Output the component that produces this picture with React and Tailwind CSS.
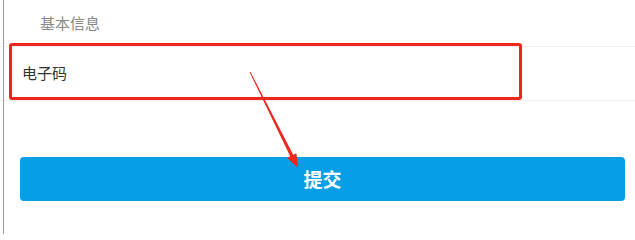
const font = { fontFamily: '"Noto Sans CJK SC", "Liberation Sans", sans-serif' };

const Arrow = () => (
  <svg className="absolute left-0 top-0 pointer-events-none" width="635" height="234">
    <polygon
      fill="#ee271e"
      points="250.4,71.8 293.2,154.7 296.4,153.2 298,168 287,157.8 290.2,156.3 249.6,72.2"
    />
  </svg>
);

export default function App() {
  return (
    <div className="relative w-[635px] h-[234px] bg-white overflow-hidden" style={font}>
      <div className="ml-[3px] h-full border-l border-[#9a9a9a] flex flex-col">
        <div className="h-[46px] flex items-center pl-[36px] text-[15px] text-[#8a8a8a]">
          基本信息
        </div>
        <div className="h-[55px] flex items-center pl-[18px] border-y border-[#f0f0f0] text-[15px] text-[#333]">
          电子码
        </div>
        <button className="mt-[56px] ml-4 mr-[10px] h-[44px] rounded-[4px] bg-[#069fe6] text-white text-[19px] font-bold">
          提交
        </button>
      </div>

      {/* annotation */}
      <div className="absolute left-[9px] top-[43px] w-[513px] h-[57px] border-[3px] border-[#ee271e] rounded-[3px]" />
      <Arrow />
    </div>
  );
}
